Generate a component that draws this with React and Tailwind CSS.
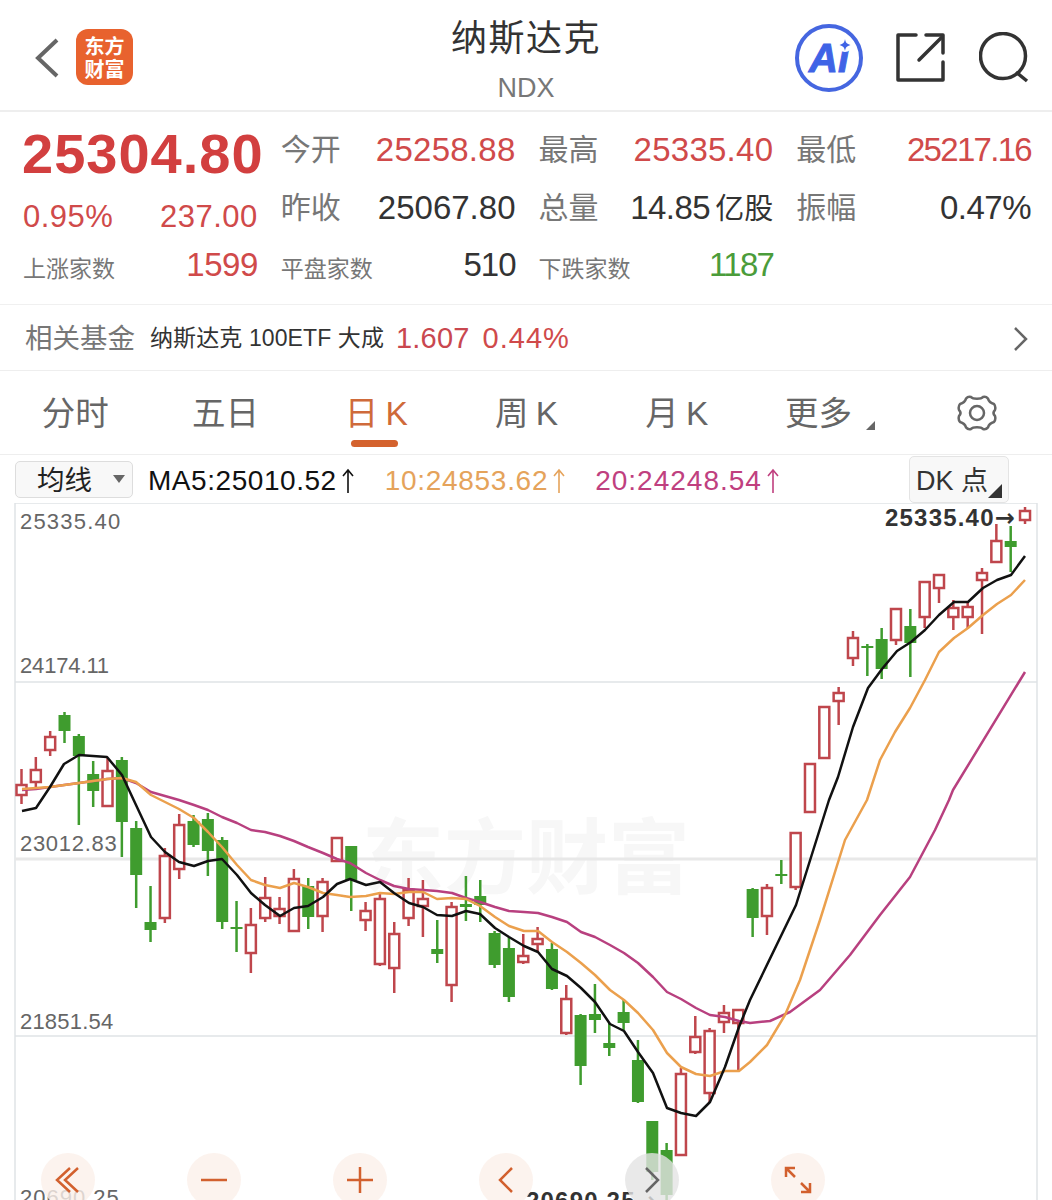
import React from 'react';

const SANS = "font-['Liberation_Sans','Noto_Sans_CJK_SC',sans-serif]";

// [up, wickTop, bodyTop, bodyBottom, wickBottom] in page pixels
const candles = [
  [1, 769, 785, 795, 804], [1, 757, 770, 782, 787], [1, 731, 737, 750, 756], [0, 712, 715, 731, 743],
  [0, 734, 736, 756, 825], [0, 761, 774, 791, 807], [1, 758, 771, 806, 807], [0, 757, 760, 822, 857],
  [0, 821, 828, 875, 908], [0, 886, 922, 930, 942], [1, 848, 856, 918, 923], [1, 814, 825, 869, 879],
  [0, 815, 821, 845, 847], [0, 813, 819, 851, 876], [0, 837, 840, 922, 929], [0, 901, 927, 929, 952],
  [1, 908, 925, 953, 973], [1, 877, 898, 918, 922], [1, 897, 909, 916, 924], [1, 869, 879, 931, 931],
  [0, 878, 886, 917, 929], [1, 878, 882, 916, 932], [1, 837, 838, 861, 861], [0, 846, 846, 880, 911],
  [1, 902, 911, 920, 931], [1, 892, 899, 964, 966], [1, 922, 934, 968, 993], [1, 878, 890, 918, 926],
  [1, 880, 899, 906, 937], [0, 920, 949, 954, 963], [1, 902, 907, 985, 1002], [0, 876, 904, 907, 921],
  [0, 880, 896, 905, 922], [0, 931, 933, 965, 968], [0, 937, 948, 997, 1002], [1, 934, 956, 962, 964],
  [1, 927, 939, 944, 952], [0, 943, 949, 989, 990], [1, 985, 999, 1033, 1035], [0, 1014, 1015, 1066, 1085],
  [0, 984, 1014, 1020, 1033], [0, 1023, 1043, 1048, 1056], [0, 1000, 1012, 1023, 1030], [0, 1040, 1060, 1102, 1103],
  [0, 1121, 1121, 1172, 1180], [0, 1143, 1150, 1195, 1200], [1, 1068, 1074, 1155, 1155], [1, 1016, 1037, 1052, 1054],
  [1, 1028, 1031, 1093, 1102], [1, 1005, 1013, 1022, 1033], [1, 1010, 1010, 1023, 1071], [0, 888, 889, 918, 937],
  [1, 884, 888, 916, 935], [0, 860, 874, 876, 884], [1, 833, 833, 887, 890], [1, 763, 764, 812, 812],
  [1, 707, 707, 758, 759], [1, 687, 693, 701, 725], [1, 631, 638, 658, 666], [0, 644, 646, 648, 676],
  [0, 628, 639, 669, 679], [1, 609, 609, 640, 645], [0, 609, 626, 643, 677], [1, 581, 582, 617, 628],
  [1, 574, 575, 588, 603], [1, 600, 608, 617, 630], [1, 602, 607, 617, 628], [1, 568, 573, 580, 634],
  [1, 524, 541, 562, 562], [0, 526, 541, 547, 572], [1, 507, 511, 520, 524],
];

const ma5 = '22,811 36,808 50,787 64,764 79,755 107,757 122,775 136,805 151,837 165,852 179,862 194,866 208,861 222,859 237,875 251,893 265,905 280,916 294,908 308,906 323,897 337,884 350,879 366,885 380,882 394,893 409,903 423,907 437,915 452,916 466,911 480,914 495,928 509,937 524,946 538,952 552,969 567,976 581,988 595,1002 610,1024 624,1031 638,1052 653,1073 667,1108 681,1113 696,1116 710,1102 725,1067 739,1027 750,1000 796,905 829,800 838,777 853,727 868,688 882,669 897,651 911,642 925,630 939,615 954,602 968,602 983,588 997,580 1011,575 1025,556';
const ma10 = '22,789 50,787 79,783 107,779 122,778 136,782 151,795 165,802 179,809 194,818 208,832 222,847 237,865 251,880 265,885 280,888 294,883 308,887 323,893 337,895 350,897 366,896 380,893 394,894 409,892 423,892 437,899 452,898 466,899 480,906 495,917 509,926 524,931 538,931 552,942 567,952 581,963 595,975 610,990 624,1000 638,1013 653,1030 667,1053 681,1067 696,1074 710,1076 725,1071 739,1071 750,1062 767,1045 785,1015 800,980 820,920 845,840 867,800 880,760 895,732 910,708 925,680 939,652 954,638 968,628 983,615 997,604 1011,595 1025,580';
const ma20 = '22,790 36,789 50,787 64,785 79,783 93,781 107,779 122,778 136,783 151,792 165,796 179,800 194,805 208,810 222,817 237,823 251,830 265,832 280,836 294,841 308,847 323,853 337,859 350,863 366,873 380,880 394,886 409,889 423,890 437,891 452,893 466,898 480,902 495,907 509,911 524,912 538,913 552,917 567,922 581,932 595,937 610,945 624,953 638,963 653,977 667,992 681,999 696,1008 710,1015 725,1017 739,1021 750,1023 770,1021 790,1012 820,990 850,955 880,915 910,877 935,830 949,800 953,790 1025,672';

const GridLabel = ({ className, children }) => (
  <span className={`absolute left-[20px] text-[22px] leading-none text-[#666] ${className}`}>{children}</span>
);

const Stat = ({ label, value, color = 'text-[#d04a4a]', tracking = 'tracking-[0.25px]' }) => (
  <div className="flex items-center justify-between h-[57.5px]">
    <span className="text-[30px] text-[#777]">{label}</span>
    <span className={`text-[33px] ${color} ${tracking}`}>{value}</span>
  </div>
);

const Count = ({ label, value, color, tracking }) => (
  <div className="flex items-center justify-between h-[57.5px]">
    <span className="text-[23px] text-[#777] mt-[8px]">{label}</span>
    <span className={`text-[33px] ${color} ${tracking}`}>{value}</span>
  </div>
);

const RoundBtn = ({ grey, children }) => (
  <div className={`w-[54px] h-[54px] rounded-full flex items-center justify-center ${grey ? 'bg-[#e4e4e4]/80' : 'bg-[#fbf0ea]/80'}`}>
    {children}
  </div>
);

const UpArrow = ({ stroke }) => (
  <svg className="inline-block ml-[5px]" width="12" height="26" viewBox="0 0 12 26" fill="none" stroke={stroke} strokeWidth="1.6">
    <path d="M6 25V2M1 8l5-6 5 6" />
  </svg>
);

function CandleChart() {
  return (
    <svg className="absolute inset-0" width="1052" height="697" viewBox="0 503 1052 697">
      <g stroke="#e0e3e6" strokeWidth="1.5" fill="none">
        <path d="M15 503H1037M15 682H1037M15 1036H1037M15 503V1200M1037 503V1200" />
        <path d="M15 859H1037" stroke="#e8e8e8" strokeWidth="3" />
      </g>
      {candles.map(([up, wt, bt, bb, wb], i) => {
        const x = 21.5 + i * 14.336;
        const color = up ? '#bf464c' : '#3f9c2e';
        return (
          <g key={i}>
            <line x1={x} x2={x} y1={wt} y2={wb} stroke={color} strokeWidth="2.5" />
            <rect
              x={x - (up ? 5 : 6)}
              y={bt}
              width={up ? 10 : 12}
              height={Math.max(bb - bt, 2)}
              fill={up ? '#fff' : color}
              stroke={up ? color : 'none'}
              strokeWidth="2.5"
            />
          </g>
        );
      })}
      <polyline points={ma20} fill="none" stroke="#b8407f" strokeWidth="2.5" strokeLinejoin="round" />
      <polyline points={ma10} fill="none" stroke="#eba04d" strokeWidth="2.5" strokeLinejoin="round" />
      <polyline points={ma5} fill="none" stroke="#111" strokeWidth="2.5" strokeLinejoin="round" />
    </svg>
  );
}

export default function App() {
  return (
    <div className={`relative w-full h-[1200px] overflow-hidden bg-white ${SANS}`}>
      {/* header */}
      <div className="relative h-[112px] border-b-2 border-[#eeeeee] flex flex-col items-center">
        <div className="text-[36px] leading-none mt-[21px] text-[#333] tracking-[1.5px]">纳斯达克</div>
        <div className="text-[27px] leading-none mt-[18px] text-[#777]">NDX</div>
        <svg className="absolute left-[33px] top-[37px]" width="28" height="42" viewBox="0 0 28 42" fill="none" stroke="#666" strokeWidth="4">
          <path d="M24 3 5 21l19 18" />
        </svg>
        <div className="absolute left-[76px] top-[29px] w-[57px] h-[56px] rounded-[12px] bg-[#e8622e] text-white font-bold text-[20px] leading-[23px] flex flex-col items-center justify-center font-['Noto_Sans_CJK_SC',serif]">
          <span>东方</span>
          <span>财富</span>
        </div>
        <div className="absolute left-[795px] top-[24px] w-[68px] h-[68px] rounded-full border-[4px] border-[#4566e0] flex items-center justify-center">
          <span className="text-[#3f63e6] text-[40px] font-bold italic leading-none [-webkit-text-stroke:1px_#3f63e6] font-['Liberation_Sans',sans-serif]">Ai</span>
          <svg className="absolute left-[38px] top-[9px]" width="16" height="16" viewBox="0 0 16 16">
            <circle cx="8" cy="8" r="7" fill="#fff" />
            <path d="M8 2c.6 3.400 1.800 5 5.500 6C9.800 9 8.600 10.600 8 14c-.6-3.400-1.800-5-5.500-6C6.200 7 7.400 5.400 8 2Z" fill="#3f63e6" />
          </svg>
        </div>
        <svg className="absolute left-[895px] top-[32px]" width="52" height="52" viewBox="0 0 52 52" fill="none" stroke="#333" strokeWidth="3.5" strokeLinejoin="round" strokeLinecap="round">
          <path d="M21 3H3v45h45V30" />
          <path d="M31 3h17v18" />
          <path d="M47 5 24 28" />
        </svg>
        <svg className="absolute left-[979px] top-[32px]" width="54" height="52" viewBox="0 0 54 52" fill="none" stroke="#333" strokeWidth="3.5">
          <circle cx="24" cy="24" r="22.500" />
          <path d="m37 40 11 9" />
        </svg>
      </div>

      {/* quote */}
      <div className="grid grid-cols-4 content-start gap-x-[23px] pl-[23px] pr-[21px] pt-[9px] h-[193px] border-b border-[#f0f0f0]">
        <div className="text-[56px] leading-[66px] font-bold text-[#d23f3f] whitespace-nowrap tracking-[1px] h-[57.5px] -ml-[1px]">25304.80</div>
        <Stat label="今开" value="25258.88" />
        <Stat label="最高" value="25335.40" />
        <Stat label="最低" value="25217.16" tracking="tracking-[-1.7px]" />
        <div className="flex items-center justify-between h-[57.5px] pt-[19px] text-[31px] tracking-[0.5px] text-[#d04a4a]">
          <span>0.95%</span>
          <span>237.00</span>
        </div>
        <Stat label="昨收" value="25067.80" color="text-[#333]" tracking="tracking-[0px]" />
        <Stat
          label="总量"
          color="text-[#333]"
          tracking="tracking-[-0.5px]"
          value={<>14.85<span className="ml-[5px] text-[29px] tracking-[0px]">亿股</span></>}
        />
        <Stat label="振幅" value="0.47%" color="text-[#333]" tracking="tracking-[-0.5px]" />
        <Count label="上涨家数" value="1599" color="text-[#d04a4a]" tracking="tracking-[-0.5px]" />
        <Count label="平盘家数" value="510" color="text-[#333]" tracking="tracking-[-1px]" />
        <Count label="下跌家数" value="1187" color="text-[#4b9c3a]" tracking="tracking-[-1.7px]" />
      </div>

      {/* related fund */}
      <div className="flex items-center h-[66px] pl-[25px] pr-[24px] pt-[2px] border-b border-[#eeeeee]">
        <span className="text-[27.5px] text-[#777]">相关基金</span>
        <span className="ml-[15px] text-[23px] tracking-[0.1px] text-[#333]">纳斯达克 100ETF 大成</span>
        <span className="ml-[12px] text-[29px] tracking-[0.2px] text-[#c9474f]">1.607</span>
        <span className="ml-[13px] text-[29px] tracking-[1px] text-[#d04a4a]">0.44%</span>
        <svg className="ml-auto" width="15" height="26" viewBox="0 0 15 26" fill="none" stroke="#666" strokeWidth="2.5">
          <path d="m2 2 11 11L2 24" />
        </svg>
      </div>

      {/* period tabs */}
      <div className="grid grid-cols-7 h-[84px] border-b border-[#eeeeee] text-[33.5px] text-[#666]">
        {['分时', '五日', '日 K', '周 K', '月 K'].map((tab) => (
          <div key={tab} className="relative flex items-center justify-center">
            <span className={`mt-[3px] ${tab.includes('K') ? 'tracking-[-1px]' : ''} ${tab === '日 K' ? 'text-[#cf6a3a]' : ''}`}>{tab}</span>
            {tab === '日 K' && <div className="absolute bottom-[7px] left-[50px] w-[47px] h-[7px] rounded bg-[#d4622e]" />}
          </div>
        ))}
        <div className="relative flex items-center justify-center pr-[16px]">
          <span className="mt-[3px]">更多</span>
          <div className="absolute left-[115px] top-[50px] w-0 h-0 border-l-[9px] border-l-transparent border-b-[9px] border-b-[#666]" />
        </div>
        <div className="flex items-center justify-center">
          <svg width="40" height="40" viewBox="0 0 40 40" fill="none" stroke="#666" strokeWidth="2.5" strokeLinejoin="round">
            <path d="M14 4c2 2.400 10 2.400 12 0 2-.8 4 .4 5 1.600.8 3 3.600 4.800 6 5.400 1.600 2 1.600 4 1 6-2 2-2 4 0 6 .6 2 .6 4-1 6-2.400.6-5.200 2.400-6 5.400-1 1.200-3 2.400-5 1.600-2-2.400-10-2.400-12 0-2 .8-4-.4-5-1.600-.8-3-3.600-4.800-6-5.400-1.600-2-1.600-4-1-6 2-2 2-4 0-6-.6-2-.6-4 1-6 2.400-.6 5.200-2.400 6-5.400 1-1.200 3-2.400 5-1.600Z" />
            <circle cx="20" cy="20" r="7" />
          </svg>
        </div>
      </div>

      {/* moving averages */}
      <div className="relative flex items-center h-[48px] pl-[15px] text-[28px]">
        <div className="flex items-center justify-between w-[118px] h-[37px] pl-[21px] pr-[7px] rounded-[5px] border border-[#dddddd] bg-[#f8f8f8] text-[27.5px] text-[#222]">
          <span className="mt-[4px]">均线</span>
          <div className="w-0 h-0 border-x-[6px] border-x-transparent border-t-[8px] border-t-[#666]" />
        </div>
        <span className="ml-[15px] mt-[4px] flex items-center tracking-[0.55px] text-[#111]">MA5:25010.52<UpArrow stroke="#111" /></span>
        <span className="ml-[31px] mt-[4px] flex items-center tracking-[0.7px] text-[#e5a35b]">10:24853.62<UpArrow stroke="#e5a35b" /></span>
        <span className="ml-[30px] mt-[4px] flex items-center tracking-[1px] text-[#c0407f]">20:24248.54<UpArrow stroke="#c0407f" /></span>
        <div className="absolute left-[909px] top-[1px] w-[100px] h-[47px] rounded-[5px] border border-[#e4e4e4] bg-[#f8f8f8] flex items-center pl-[6px] text-[27px] text-[#333]">
          <span className="mt-[4px]">DK 点</span>
          <div className="absolute right-[6px] bottom-[4px] w-0 h-0 border-l-[14px] border-l-transparent border-b-[14px] border-b-[#333]" />
        </div>
      </div>

      {/* chart */}
      <div className="relative h-[697px]">
        <div className="absolute left-[362px] top-[315px] text-[82px] leading-none font-bold text-[#f7f7f7] whitespace-nowrap">东方财富</div>
        <CandleChart />
        <GridLabel className="top-[8px] tracking-[1.2px]">25335.40</GridLabel>
        <GridLabel className="top-[152px] tracking-[-0.15px]">24174.11</GridLabel>
        <GridLabel className="top-[330px] tracking-[0.7px]">23012.83</GridLabel>
        <GridLabel className="top-[508px] tracking-[0.2px]">21851.54</GridLabel>
        <GridLabel className="top-[684px] tracking-[1px]">20690.25</GridLabel>
        <span className="absolute left-[885px] top-[2px] text-[24px] leading-[26px] font-bold tracking-[1.2px] text-[#333]">
          25335.40<span className="font-['DejaVu_Sans',sans-serif] tracking-[0px]">→</span>
        </span>
        <span className="absolute left-[526px] top-[685px] text-[24px] leading-[26px] font-bold tracking-[1.2px] text-[#333]">
          20690.25<span className="font-['DejaVu_Sans',sans-serif] tracking-[0px]">→</span>
        </span>

        {/* zoom and pan buttons */}
        <div className="absolute left-[41px] top-[650px] flex gap-[92px]">
          <RoundBtn>
            <svg width="28" height="28" viewBox="0 0 28 28" fill="none" stroke="#d2602e" strokeWidth="2.5"><path d="M16 2 3 14l13 12M24 2 11 14l13 12" /></svg>
          </RoundBtn>
          <RoundBtn>
            <svg width="28" height="28" viewBox="0 0 28 28" fill="none" stroke="#d2602e" strokeWidth="2.5"><path d="M1 14h26" /></svg>
          </RoundBtn>
          <RoundBtn>
            <svg width="28" height="28" viewBox="0 0 28 28" fill="none" stroke="#d2602e" strokeWidth="2.5"><path d="M1 14h26M14 1v26" /></svg>
          </RoundBtn>
          <RoundBtn>
            <svg width="18" height="28" viewBox="0 0 18 28" fill="none" stroke="#d2602e" strokeWidth="2.5"><path d="M15 2 3 14l12 12" /></svg>
          </RoundBtn>
          <RoundBtn grey>
            <svg width="18" height="28" viewBox="0 0 18 28" fill="none" stroke="#666" strokeWidth="2.5"><path d="m3 2 12 12L3 26" /></svg>
          </RoundBtn>
          <RoundBtn>
            <svg width="30" height="30" viewBox="0 0 30 30" fill="none" stroke="#d2602e" strokeWidth="2.5"><path d="M3 12V3h9M3 3l9 9M27 18v9h-9M27 27l-9-9" /></svg>
          </RoundBtn>
        </div>
      </div>
    </div>
  );
}
